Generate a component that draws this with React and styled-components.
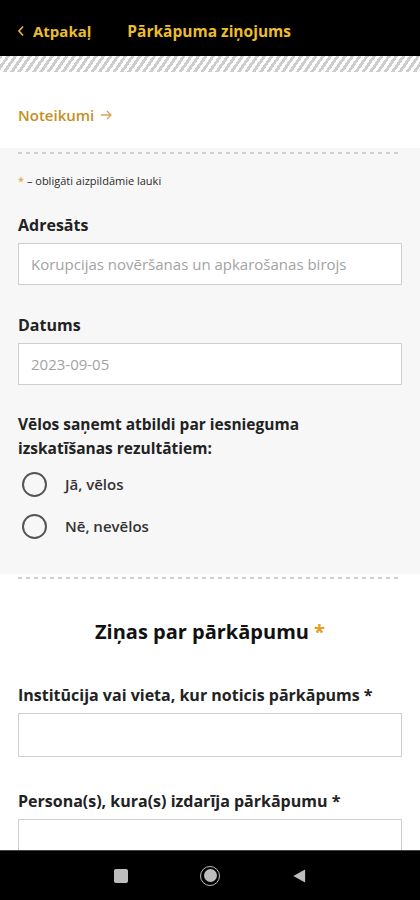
import React from 'react';
import styled, { createGlobalStyle } from 'styled-components';

const GlobalStyle = createGlobalStyle`
  html, body {
    margin: 0;
    padding: 0;
    background: #fff;
  }
  body {
    font-family: 'Open Sans', 'Lato', sans-serif;
    color: #1c1c1c;
  }
  * {
    box-sizing: border-box;
  }
`;

const App = () => (
  <>
    <GlobalStyle />
    <Screen>
      <Header>
        <BackLink href="#">
          <BackChevron viewBox="0 0 8 12" aria-hidden="true">
            <path d="M6 1.5 L2 6 L6 10.5" />
          </BackChevron>
          Atpakaļ
        </BackLink>
        <Title>Pārkāpuma ziņojums</Title>
      </Header>
      <Stripes />

      <Scroll>
        <RulesRow>
          <RulesLink href="#">
            Noteikumi
            <ArrowIcon viewBox="0 0 14 14" aria-hidden="true">
              <path d="M2 7 H12 M8 3 L12 7 L8 11" />
            </ArrowIcon>
          </RulesLink>
        </RulesRow>

        <GraySection>
          <Dashed />
          <Note>
            <Star>*</Star> – obligāti aizpildāmie lauki
          </Note>

          <Field $gap={26}>
            <Label>Adresāts</Label>
            <Input readOnly value="" placeholder="Korupcijas novēršanas un apkarošanas birojs" />
          </Field>

          <Field $gap={30}>
            <Label>Datums</Label>
            <Input readOnly value="" placeholder="2023-09-05" />
          </Field>

          <Question>
            Vēlos saņemt atbildi par iesnieguma izskatīšanas rezultātiem:
          </Question>
          <RadioList>
            <RadioRow>
              <RadioCircle />
              <RadioText>Jā, vēlos</RadioText>
            </RadioRow>
            <RadioRow>
              <RadioCircle />
              <RadioText>Nē, nevēlos</RadioText>
            </RadioRow>
          </RadioList>
        </GraySection>

        <WhiteSection>
          <Dashed />
          <SectionTitle>
            Ziņas par pārkāpumu <Star>*</Star>
          </SectionTitle>

          <Field $gap={0}>
            <Label>Institūcija vai vieta, kur noticis pārkāpums *</Label>
            <Input $tall />
          </Field>

          <Field $gap={34}>
            <Label>Persona(s), kura(s) izdarīja pārkāpumu *</Label>
            <Input $tall />
          </Field>
        </WhiteSection>
      </Scroll>

      <NavBar>
        <NavSquare />
        <NavHome>
          <NavHomeInner />
        </NavHome>
        <NavBack viewBox="0 0 16 18" aria-hidden="true">
          <path d="M15 1.5 L15 16.5 L1.5 9 Z" />
        </NavBack>
      </NavBar>
    </Screen>
  </>
);

const Screen = styled.div`
  width: 420px;
  height: 900px;
  display: flex;
  flex-direction: column;
  overflow: hidden;
  background: #fff;
`;

const Header = styled.header`
  flex: none;
  height: 56px;
  background: #000;
  display: flex;
  align-items: center;
  padding: 6px 0 0 17px;
  gap: 36px;
`;

const BackLink = styled.a`
  display: flex;
  align-items: center;
  gap: 8px;
  color: #ecbd2e;
  text-decoration: none;
  font-size: 15px;
  font-weight: 700;
`;

const BackChevron = styled.svg`
  width: 8px;
  height: 12px;
  fill: none;
  stroke: #ecbd2e;
  stroke-width: 1.6;
`;

const Title = styled.h1`
  margin: 0;
  color: #ecbd2e;
  font-size: 15.5px;
  font-weight: 700;
`;

const Stripes = styled.div`
  flex: none;
  height: 16px;
  background: repeating-linear-gradient(
    -55deg,
    #ffffff 0,
    #ffffff 3px,
    #cdcdcd 3px,
    #cdcdcd 6px
  );
`;

const Scroll = styled.main`
  flex: 1;
  overflow: hidden;
`;

const RulesRow = styled.div`
  height: 76px;
  display: flex;
  align-items: center;
  padding: 10px 18px 0;
`;

const RulesLink = styled.a`
  display: flex;
  align-items: center;
  gap: 5px;
  color: #c58f22;
  font-size: 15px;
  font-weight: 600;
  text-decoration: none;
`;

const ArrowIcon = styled.svg`
  width: 14px;
  height: 14px;
  fill: none;
  stroke: #d6a550;
  stroke-width: 1.3;
`;

const GraySection = styled.section`
  background: #f7f7f7;
  padding: 4px 18px 33px 18px;
`;

const WhiteSection = styled.section`
  background: #fff;
  padding: 3px 18px 0;
`;

const Dashed = styled.div`
  height: 2px;
  background: repeating-linear-gradient(
    90deg,
    #cfcfcf 0,
    #cfcfcf 4px,
    transparent 4px,
    transparent 8px
  );
`;

const Note = styled.p`
  margin: 19px 0 0;
  font-size: 11px;
  line-height: 16px;
  color: #2a2a2a;
`;

const Star = styled.span`
  color: #e0a020;
`;

const Field = styled.div`
  display: flex;
  flex-direction: column;
  gap: 8px;
  margin-top: ${(p) => p.$gap}px;
`;

const Label = styled.label`
  font-size: 16px;
  font-weight: 700;
  line-height: 20px;
  color: #222;
`;

const Input = styled.input`
  height: ${(p) => (p.$tall ? 44 : 42)}px;
  width: 100%;
  border: 1.5px solid #cfcfcf;
  border-radius: 0;
  background: #fff;
  padding: 0 12px;
  font-family: inherit;
  font-size: 15px;
  color: #222;

  &::placeholder {
    color: #a3a3a3;
  }
`;

const Question = styled.p`
  margin: 27px 0 0;
  max-width: 320px;
  font-size: 15.5px;
  font-weight: 700;
  line-height: 24px;
  color: #222;
`;

const RadioList = styled.div`
  display: flex;
  flex-direction: column;
  gap: 12px;
  margin-top: 9px;
`;

const RadioRow = styled.div`
  height: 30px;
  display: flex;
  align-items: center;
  gap: 18px;
  padding-left: 4px;
`;

const RadioCircle = styled.span`
  width: 25px;
  height: 25px;
  border: 2px solid #555;
  border-radius: 50%;
  background: transparent;
`;

const RadioText = styled.span`
  font-size: 15px;
  font-weight: 600;
  color: #333;
`;

const SectionTitle = styled.h2`
  margin: 40px 0 40px;
  text-align: center;
  font-size: 20px;
  font-weight: 700;
  line-height: 26px;
  color: #111;
`;

const NavBar = styled.nav`
  flex: none;
  height: 50px;
  background: #000;
  border-top: 1px solid #444;
  display: flex;
  align-items: center;
  justify-content: center;
  gap: 72px;
`;

const NavSquare = styled.span`
  width: 14px;
  height: 14px;
  border-radius: 2px;
  background: #bdbdbd;
`;

const NavHome = styled.span`
  width: 20px;
  height: 20px;
  border-radius: 50%;
  border: 1.5px solid #bdbdbd;
  display: flex;
  align-items: center;
  justify-content: center;
`;

const NavHomeInner = styled.span`
  width: 13px;
  height: 13px;
  border-radius: 50%;
  background: #bdbdbd;
`;

const NavBack = styled.svg`
  width: 14px;
  height: 16px;
  fill: #bdbdbd;
`;

export default App;
